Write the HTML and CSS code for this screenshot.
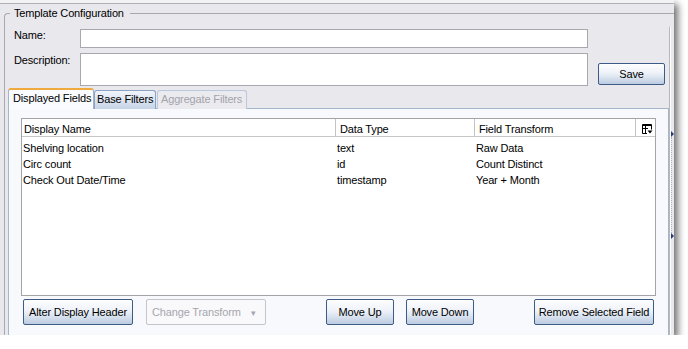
FILE: index.html
```html
<!DOCTYPE html>
<html lang="en">
<head>
  <meta charset="UTF-8">
  <title>Template Configuration</title>
  <link rel="stylesheet" href="styles.css">
</head>
<body>
  <div class="window">
    <div class="topbar"></div>

    <fieldset class="config">
      <legend>Template Configuration</legend>

      <div class="body">
        <div class="main">
          <div class="form">
            <label for="name">Name:</label>
            <input type="text" id="name" class="field">
            <span></span>

            <label for="desc" class="desc-label">Description:</label>
            <textarea id="desc" class="field"></textarea>
            <button class="btn save">Save</button>
          </div>

          <div class="tabs">
            <span class="tab active">Displayed Fields</span>
            <span class="tab base">Base Filters</span>
            <span class="tab disabled">Aggregate Filters</span>
          </div>

          <div class="panel">
            <div class="grid">
              <div class="grid-head">
                <span class="cell first">Display Name</span>
                <span class="cell">Data Type</span>
                <span class="cell">Field Transform</span>
                <span class="cell menu">
                  <svg width="11" height="10" viewBox="0 0 11 10">
                    <path d="M0.5 9.5V0.5H9.5V5.5" fill="none" stroke="#000"/>
                    <path d="M0 1.5H10M0.5 4.5H6M3.5 1.5V9.5M0.5 9.5H5" fill="none" stroke="#000"/>
                    <path d="M5.5 6.5H10.5L8 9.5Z" fill="#000"/>
                  </svg>
                </span>
              </div>
              <div class="rows">
                <div class="row"><span class="cell first">Shelving location</span><span class="cell">text</span><span class="cell">Raw Data</span></div>
                <div class="row"><span class="cell first">Circ count</span><span class="cell">id</span><span class="cell">Count Distinct</span></div>
                <div class="row"><span class="cell first">Check Out Date/Time</span><span class="cell">timestamp</span><span class="cell">Year + Month</span></div>
              </div>
            </div>

            <div class="actions">
              <button class="btn alter">Alter Display Header</button>
              <div class="combo">Change Transform <span class="arrow">&#9662;</span></div>
              <button class="btn move up">Move Up</button>
              <button class="btn move">Move Down</button>
              <button class="btn remove">Remove Selected Field</button>
            </div>
          </div>
        </div>

        <div class="splitter">
          <span class="grip"></span>
          <span class="dots"></span>
          <span class="grip"></span>
        </div>
      </div>
    </fieldset>
  </div>
</body>
</html>
```

FILE: styles.css
```css
body {
  margin: 0;
  background: #fff;
  font-family: 'Liberation Sans', Arial, sans-serif;
  font-size: 11px;
  letter-spacing: -0.15px;
  color: #000;
}

.window {
  width: 674px;
  height: 335px;
  background: #e9e8ed;
  box-shadow: 4px 4px 7px rgba(0,0,0,0.55);
  overflow: hidden;
}

.topbar {
  height: 3px;
  background: #f2f1f4;
  border-bottom: 1px solid #b2b1b8;
}

.config {
  margin: 3px 0 0 4px;
  padding: 0 0 0 3px;
  border: 1px solid #a9a8af;
  border-right: none;
  border-bottom: none;
  border-radius: 4px 0 0 0;
  min-width: 0;
}

.config legend {
  margin-left: 2px;
  padding: 0 6px 0 4px;
  line-height: 13px;
}

.body {
  display: flex;
  height: 315px;
}

.main {
  width: 661px;
  display: flex;
  flex-direction: column;
}

/* form */

.form {
  display: grid;
  grid-template-columns: 66px 508px auto;
  grid-template-rows: 19px 33px;
  row-gap: 5px;
  margin: 9px 0 0 6px;
}

.form label {
  line-height: 13px;
}

.desc-label {
  padding-top: 1px;
}

.field {
  box-sizing: border-box;
  margin: 0;
  border: 1px solid #a7a7ae;
  background: #fff;
  font: inherit;
  resize: none;
}

/* buttons */

.btn {
  box-sizing: border-box;
  margin: 0;
  padding: 0;
  border: 1px solid #3d5b87;
  border-radius: 2px;
  background: linear-gradient(to bottom, #fdfdfe, #eef2f8 45%, #d3deec 75%, #bccbe1);
  box-shadow: inset 0 1px 0 #fff;
  font: inherit;
  letter-spacing: inherit;
  color: #000;
  cursor: pointer;
}

.save {
  align-self: end;
  width: 67px;
  height: 22px;
  margin: 0 0 1px 10px;
}

/* tabs */

.tabs {
  display: flex;
  align-items: flex-end;
  height: 21px;
  margin: 2px 0 -1px;
  position: relative;
}

.tab {
  box-sizing: border-box;
  height: 19px;
  padding-left: 3px;
  border: 1px solid #8aa2c4;
  border-bottom: none;
  border-radius: 3px 3px 0 0;
  background: linear-gradient(to bottom, #f1f5fb, #d9e3f0 55%, #c6d4e8);
  line-height: 17px;
  white-space: nowrap;
  overflow: hidden;
}

.tab.active {
  width: 86px;
  height: 21px;
  padding-left: 4px;
  border-color: #a3b5cd;
  border-top: 2px solid #eeaa3c;
  background: #fafbfe;
  line-height: 16px;
}

.tab.base {
  width: 62px;
  padding-left: 2px;
}

.tab.disabled {
  width: 90px;
  margin-left: 1px;
  border-color: #b9c8dc;
  background: #ebeaef;
  color: #a3a3ab;
}

/* panel */

.panel {
  flex: 1;
  padding: 9px 12px 0;
  border: 1px solid #a5b6cc;
  border-bottom: none;
  background: #f8f9fd;
}

.grid {
  box-sizing: border-box;
  height: 178px;
  border: 1px solid #a3a3a8;
  background: #fff;
}

.grid-head,
.row {
  display: grid;
  grid-template-columns: 314px 139px 161px 1fr;
}

.grid-head {
  box-sizing: border-box;
  height: 18px;
  border-bottom: 1px solid #c6c6c9;
}

.grid-head .cell {
  padding: 3px 0 0 4px;
  line-height: 14px;
  border-right: 1px solid #c3c3c7;
}

.grid-head .cell.first {
  padding-left: 2px;
}

.grid-head .menu {
  border-right: none;
  padding: 4px 0 0 6px;
}

.rows {
  padding-top: 3px;
}

.row {
  height: 16px;
  line-height: 16px;
}

.row .cell {
  padding-left: 1px;
}

/* bottom buttons */

.actions {
  display: flex;
  height: 26px;
  margin: 3px 2px 0;
}

.actions .btn {
  height: 26px;
}

.alter {
  width: 110px;
}

.combo {
  box-sizing: border-box;
  width: 120px;
  margin-left: 13px;
  padding-left: 5px;
  border: 1px solid #c5c5cb;
  border-radius: 2px;
  background: #f9f9fb;
  color: #a6a6ae;
  line-height: 24px;
}

.combo .arrow {
  margin-left: 7px;
  font-size: 9px;
}

.move {
  width: 68px;
}

.move.up {
  margin-left: auto;
  margin-right: 12px;
}

.remove {
  width: 120px;
  margin-left: auto;
}

/* splitter at the right edge */

.splitter {
  box-sizing: border-box;
  width: 5px;
  margin-top: 7px;
  padding-top: 104px;
  border-left: 1px solid #b7b6bd;
  box-shadow: inset 1px 0 0 #fff;
  display: flex;
  flex-direction: column;
  align-items: flex-end;
}

.grip {
  width: 0;
  height: 0;
  border-top: 3px solid transparent;
  border-bottom: 3px solid transparent;
  border-left: 3px solid #2c3b73;
}

.dots {
  height: 96px;
  width: 1px;
  margin-right: 1px;
  border-left: 1px dotted #b0b0b8;
}
```
